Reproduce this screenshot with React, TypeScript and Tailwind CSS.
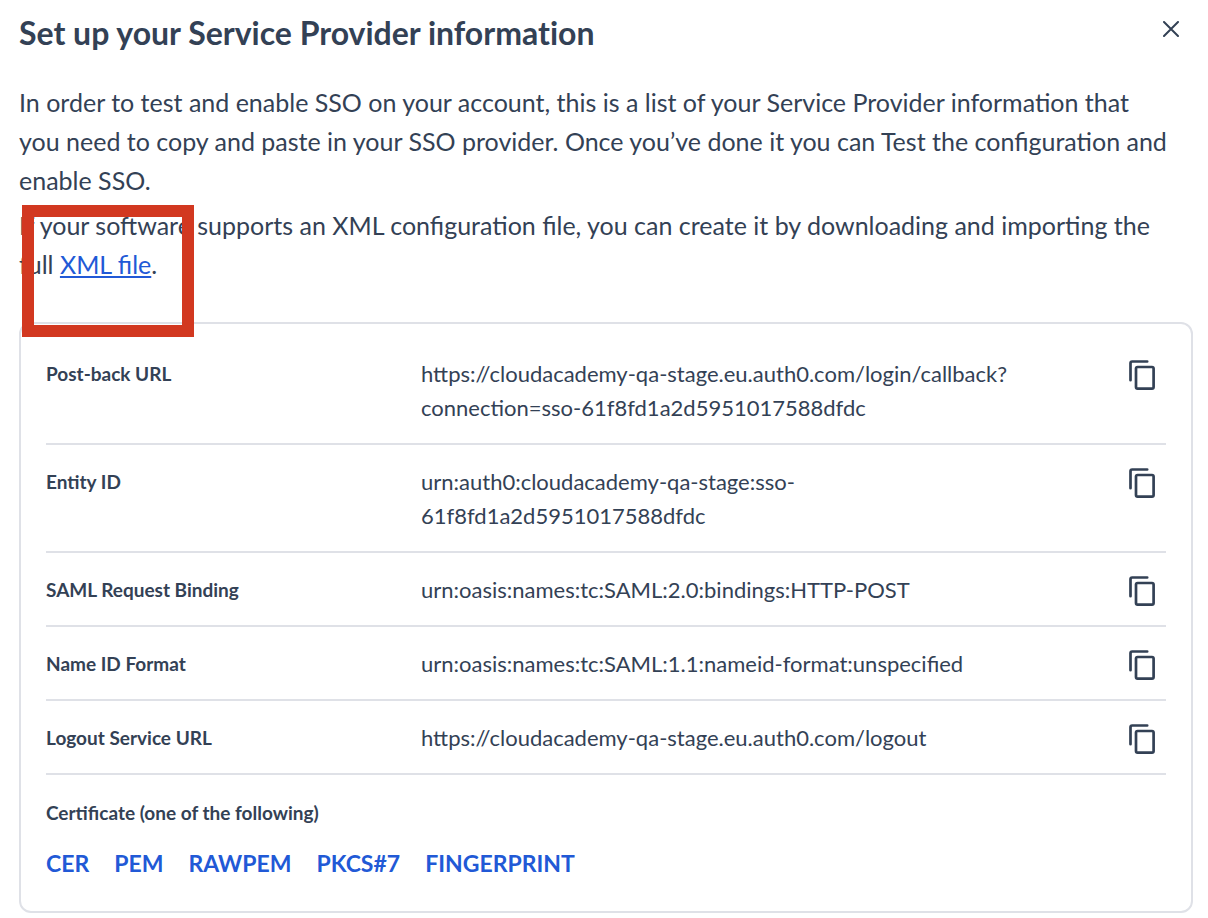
import { ReactNode } from "react";

const entries = [
  { label: "Post-back URL", lines: ["https://cloudacademy-qa-stage.eu.auth0.com/login/callback?", "connection=sso-61f8fd1a2d5951017588dfdc"] },
  { label: "Entity ID", lines: ["urn:auth0:cloudacademy-qa-stage:sso-", "61f8fd1a2d5951017588dfdc"] },
  { label: "SAML Request Binding", lines: ["urn:oasis:names:tc:SAML:2.0:bindings:HTTP-POST"] },
  { label: "Name ID Format", lines: ["urn:oasis:names:tc:SAML:1.1:nameid-format:unspecified"] },
  { label: "Logout Service URL", lines: ["https://cloudacademy-qa-stage.eu.auth0.com/logout"] },
];

const certificates = ["CER", "PEM", "RAWPEM", "PKCS#7", "FINGERPRINT"];

function CopyIcon() {
  return (
    <svg viewBox="0 0 26 30" className="h-[30px] w-[26px]" fill="none" stroke="currentColor" strokeWidth="2.7" aria-hidden="true">
      <path d="M1.5 20.2V3.2Q1.5 1.5 3.2 1.5H18.2" strokeLinecap="round" />
      <rect x="7" y="7" width="17.6" height="21.6" rx="1.6" />
    </svg>
  );
}

function Row({ label, children }: { label: string; children: ReactNode }) {
  return (
    <div className="grid grid-cols-[375px_1fr_37px] items-start border-b-2 border-[#dfe1e7] pt-5 pb-[18px]">
      <dt className="text-[19px] leading-[34px] font-bold">{label}</dt>
      <dd className="text-[22px] leading-[34px]">{children}</dd>
      <dd className="pt-[3px]">
        <button type="button" aria-label={`Copy ${label}`} className="block">
          <CopyIcon />
        </button>
      </dd>
    </div>
  );
}

export default function App() {
  return (
    <main className="min-h-screen bg-white pt-3 pr-[15px] pb-1 pl-[19px] font-['Lato',sans-serif] text-[#334155]">
      <header className="flex items-start justify-between">
        <h1 className="text-[32px] leading-[42px] font-bold [font-variant-ligatures:no-common-ligatures]">
          Set up your Service Provider information
        </h1>
        <button type="button" aria-label="Close" className="px-[14px] py-[9px]">
          <svg viewBox="0 0 16 16" className="size-4" fill="none" stroke="currentColor" strokeWidth="2" strokeLinecap="round" aria-hidden="true">
            <path d="M1 1l14 14M15 1L1 15" />
          </svg>
        </button>
      </header>
      <section className="mt-[29px] pr-[22px] text-[25px] leading-[39px]">
        <p>
          In order to test and enable SSO on your account, this is a list of your Service Provider information that you
          need to copy and paste in your SSO provider. Once you’ve done it you can Test the configuration and enable SSO.
        </p>
        <p className="relative mt-1.5">
          If your software supports an XML configuration file, you can create it by downloading and importing the full{" "}
          <a href="#xml" className="text-[#2159d6] underline">XML file</a>.
          <span className="pointer-events-none absolute -top-px left-[3px] h-[132px] w-[172px] border-12 border-[#d23820]" />
        </p>
      </section>
      <section className="mt-[38px] rounded-xl border-2 border-[#dfe1e7] px-[25px] pt-[13px] pb-[30px]">
        <dl>
          {entries.map(({ label, lines }) => (
            <Row key={label} label={label}>
              {lines.map((line) => (
                <span key={line} className="block">{line}</span>
              ))}
            </Row>
          ))}
        </dl>
        <h2 className="mt-[22px] text-[19px] leading-[32px] font-bold">Certificate (one of the following)</h2>
        <nav className="mt-4 flex gap-[25px] text-[23px] leading-[36px] font-bold text-[#2159d6]">
          {certificates.map((name) => (
            <a key={name} href={`#${name}`}>{name}</a>
          ))}
        </nav>
      </section>
    </main>
  );
}
